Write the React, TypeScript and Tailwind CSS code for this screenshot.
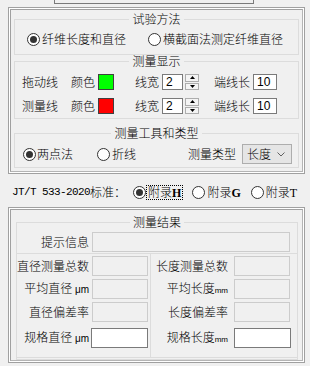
import type { ReactNode } from 'react';

const Radio = ({ checked = false }: { checked?: boolean }) => (
  <span className="w-[13px] h-[13px] shrink-0 rounded-full border border-[#333] bg-white flex items-center justify-center">
    {checked && <span className="w-[7px] h-[7px] rounded-full bg-[#333]" />}
  </span>
);

const Group = ({ title, className = '', children }: { title?: string; className?: string; children: ReactNode }) => (
  <fieldset className={`border border-[#dcdcdc] ${className}`}>
    {title && <legend className="mx-auto px-[3px] leading-[12px]">{title}</legend>}
    {children}
  </fieldset>
);

// double grey frame round the two big panels
const Panel = ({ className = '', children }: { className?: string; children: ReactNode }) => (
  <div className={`border border-[#a0a0a0] ${className}`}>
    <div className="border border-white">
      <div className="border border-t-[#a0a0a0] border-l-[#a0a0a0] border-r-[#b4b4b4] border-b-[#b4b4b4]">{children}</div>
    </div>
  </div>
);

const Spin = () => (
  <div className="ml-[2px] w-[14px] h-[16px] flex flex-col gap-[1px]">
    {[0, 1].map((i) => (
      <div key={i} className="flex-1 border border-[#adadad] bg-[#f4f4f4] flex items-center justify-center">
        <svg width="5" height="3" viewBox="0 0 5 3">
          <polygon points={i === 0 ? '0,3 5,3 2.5,0' : '0,0 5,0 2.5,3'} fill="#000" />
        </svg>
      </div>
    ))}
  </div>
);

const Box = ({ white = false, className = '' }: { white?: boolean; className?: string }) => (
  <div
    className={`h-[20px] border ${white ? 'bg-white border-[#7a7a7a]' : 'bg-[#f0f0f0] border-[#cccccc]'} ${className}`}
  />
);

const Unit = ({ children, size }: { children: ReactNode; size: string }) => (
  <span className={`font-['Liberation_Sans',sans-serif] ${size}`}>{children}</span>
);

const Row = ({ label, w, white, className }: { label: ReactNode; w: string; white?: boolean; className: string }) => (
  <div className={`flex items-center ${className}`}>
    <div className={`${w} text-right leading-[14px] whitespace-nowrap`}>{label}</div>
    <Box white={white} className={white ? 'w-[57px]' : 'w-[56px]'} />
  </div>
);

export default function App() {
  return (
    <div className="w-[310px] h-[366px] overflow-hidden bg-[#f0f0f0] text-[12px] text-black font-light font-['Noto_Sans_CJK_SC',sans-serif]">
      <div className="ml-[54px] w-[200px] h-[4px] border border-t-0 border-[#7a7a7a]" />

      <Panel className="mt-[3px] ml-[8px] w-[297px]">
        <div className="pt-[3px] pb-[3px] px-[3px]">
          <Group title="试验方法" className="pb-[8px]">
            <div className="mt-[7px] h-[14px] pl-[12px] flex items-center leading-[14px]">
              <Radio checked />
              <span className="ml-[2px]">纤维长度和直径</span>
              <span className="ml-[22px]">
                <Radio />
              </span>
              <span className="ml-[2px]">横截面法测定纤维直径</span>
            </div>
          </Group>

          <Group title="测量显示" className="pb-[4px]">
            {[
              { name: '拖动线', color: 'bg-[#00ff00]', mt: 'mt-[7px]' },
              { name: '测量线', color: 'bg-[#ff0000]', mt: 'mt-[8px]' },
            ].map((r) => (
              <div key={r.name} className={`${r.mt} h-[16px] pl-[7px] flex items-center leading-[14px]`}>
                <span>{r.name}</span>
                <span className="ml-[13px]">颜色</span>
                <div className={`ml-[3px] w-[16px] h-[16px] border border-[#404040] ${r.color}`} />
                <span className="ml-[21px]">线宽</span>
                <div className="ml-[3px] w-[21px] h-[16px] bg-white border border-[#7a7a7a] pl-[3px] font-['Liberation_Sans',sans-serif] font-normal text-[12px] leading-[14px]">
                  2
                </div>
                <Spin />
                <span className="ml-[15px]">端线长</span>
                <div className="ml-[3px] w-[24px] h-[16px] bg-white border border-[#7a7a7a] pl-[3px] font-['Liberation_Sans',sans-serif] font-normal text-[12px] leading-[14px]">
                  10
                </div>
              </div>
            ))}
          </Group>

          <Group title="测量工具和类型" className="mt-[8px] pb-[3px]">
            <div className="mt-[5px] h-[20px] pl-[8px] pr-[6px] flex items-center leading-[14px]">
              <Radio checked />
              <span className="ml-[1px]">两点法</span>
              <span className="ml-[24px]">
                <Radio />
              </span>
              <span className="ml-[2px]">折线</span>
              <span className="ml-auto">测量类型</span>
              <div className="ml-[6px] w-[50px] h-[20px] border border-[#adadad] bg-[#e5e5e5] flex items-center pl-[4px] pr-[6px]">
                <span>长度</span>
                <svg className="ml-auto" width="8" height="5" viewBox="0 0 8 5">
                  <polyline points="0.5,0.5 4,4 7.5,0.5" fill="none" stroke="#606060" strokeWidth="1" />
                </svg>
              </div>
            </div>
          </Group>
        </div>
      </Panel>

      <div className="mt-[10px] h-[16px] pl-[12px] flex items-center leading-[14px]">
        <span className="font-['Liberation_Mono',monospace] font-normal text-[11px] tracking-[-0.6px]">JT/T 533-2020</span>
        <span>标准：</span>
        <span className="ml-[7px]">
          <Radio checked />
        </span>
        <span className="px-[1px] border border-dotted border-black leading-[12px]">
          附录<span className="font-['Liberation_Serif',serif] font-bold">H</span>
        </span>
        <span className="ml-[9px]">
          <Radio />
        </span>
        <span className="ml-[2px]">
          附录<span className="font-['Liberation_Serif',serif] font-bold">G</span>
        </span>
        <span className="ml-[10px]">
          <Radio />
        </span>
        <span className="ml-[2px]">
          附录<span className="font-['Liberation_Serif',serif] font-normal">T</span>
        </span>
      </div>

      <Panel className="mt-[7px] ml-[8px] w-[297px]">
        <div className="pt-[6px] pl-[5px] pr-[4px]">
          <Group title="测量结果" className="pb-[1px]">
            <div className="mt-[4px] flex items-center">
              <div className="w-[72px] text-right leading-[14px]">提示信息</div>
              <Box className="ml-[3px] w-[198px]" />
            </div>
            <div className="mt-[1px] flex">
              <div className="w-[134px] border-t border-r border-b border-[#dcdcdc] pb-[9px]">
                <Row label="直径测量总数" w="w-[72px] mr-[3px]" className="mt-[2px]" />
                <Row
                  label={
                    <>
                      平均直径 <Unit size="text-[10px]">μm</Unit>
                    </>
                  }
                  w="w-[72px] mr-[3px]"
                  className="mt-[3px]"
                />
                <Row label="直径偏差率" w="w-[72px] mr-[3px]" className="mt-[3px]" />
                <Row
                  label={
                    <>
                      规格直径 <Unit size="text-[10px]">μm</Unit>
                    </>
                  }
                  w="w-[72px] mr-[2px]"
                  white
                  className="mt-[6px]"
                />
              </div>
              <div className="flex-1 border-t border-b border-[#dcdcdc] pb-[9px]">
                <Row label="长度测量总数" w="w-[77px] mr-[6px]" className="mt-[2px]" />
                <Row
                  label={
                    <>
                      平均长度<Unit size="text-[8px]">mm</Unit>
                    </>
                  }
                  w="w-[77px] mr-[6px]"
                  className="mt-[3px]"
                />
                <Row label="长度偏差率" w="w-[77px] mr-[6px]" className="mt-[3px]" />
                <Row
                  label={
                    <>
                      规格长度<Unit size="text-[8px]">mm</Unit>
                    </>
                  }
                  w="w-[77px] mr-[6px]"
                  white
                  className="mt-[6px]"
                />
              </div>
            </div>
          </Group>
        </div>
      </Panel>
    </div>
  );
}
